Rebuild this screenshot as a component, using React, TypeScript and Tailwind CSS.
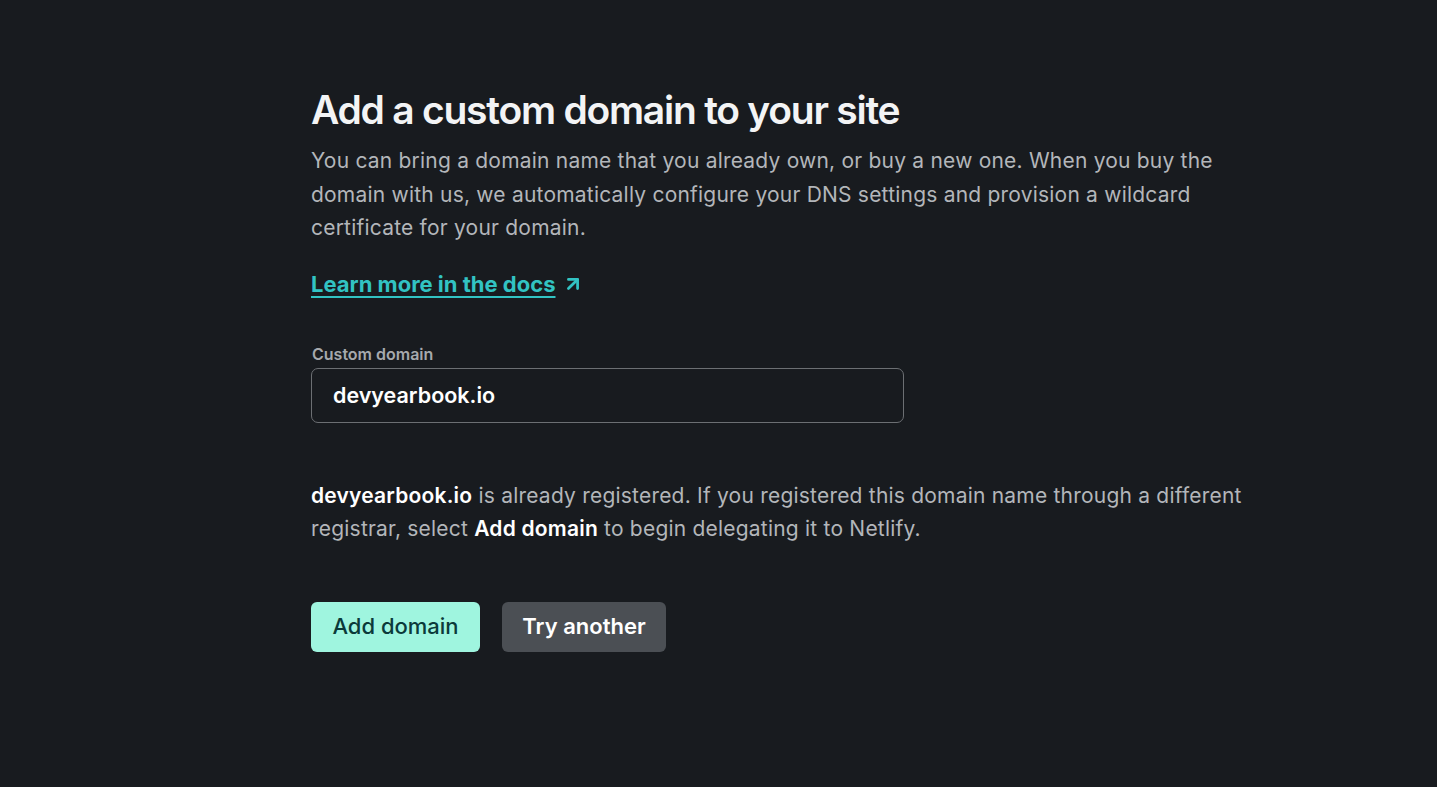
import { ArrowUpRight } from 'lucide-react'

export default function App() {
  return (
    <div className="min-h-screen w-full bg-[#181b1f] font-['Inter',sans-serif] antialiased">
      <div className="pl-[311px] pt-[86px] pr-[180px]">
        <h1 className="text-[39px] leading-[48px] font-semibold tracking-[-0.032em] text-[#f3f4f5]">
          Add a custom domain to your site
        </h1>
        <p className="mt-[10px] max-w-[935px] text-[21px] leading-[33.5px] tracking-[0.01em] text-[#b3b6ba]">
          You can bring a domain name that you already own, or buy a new one. When you buy the domain with us, we
          automatically configure your DNS settings and provision a wildcard certificate for your domain.
        </p>
        <a
          href="#"
          className="mt-[23px] inline-flex items-center gap-[7px] text-[22px] leading-[32px] font-bold text-[#32c3c3]"
        >
          <span className="underline decoration-[2px] underline-offset-[4px]">Learn more in the docs</span>
          <ArrowUpRight className="h-[22px] w-[22px]" strokeWidth={3} />
        </a>

        <div className="mt-[44px] w-[593px]">
          <label className="block pl-[1px] text-[16px] leading-[20px] font-semibold text-[#a6a9ad]">Custom domain</label>
          <div className="mt-[4px] flex h-[55px] items-center rounded-[7px] border border-[#6c6f73] px-[21px]">
            <span className="text-[21.5px] font-semibold text-white">devyearbook.io</span>
          </div>
        </div>

        <p className="mt-[56px] max-w-[950px] text-[21px] leading-[33.5px] tracking-[0.01em] text-[#b3b6ba]">
          <span className="font-semibold text-white">devyearbook.io</span> is already registered. If you registered this
          domain name through a different registrar, select <span className="font-semibold text-white">Add domain</span>{' '}
          to begin delegating it to Netlify.
        </p>

        <div className="mt-[56px] flex gap-[22px]">
          <button className="h-[50px] w-[169px] rounded-[6px] bg-[#9ff5df] text-[22px] font-medium text-[#0b3a3a]">
            Add domain
          </button>
          <button className="h-[50px] w-[164px] rounded-[6px] bg-[#4b4f54] text-[22px] font-semibold text-white">
            Try another
          </button>
        </div>
      </div>
    </div>
  )
}
